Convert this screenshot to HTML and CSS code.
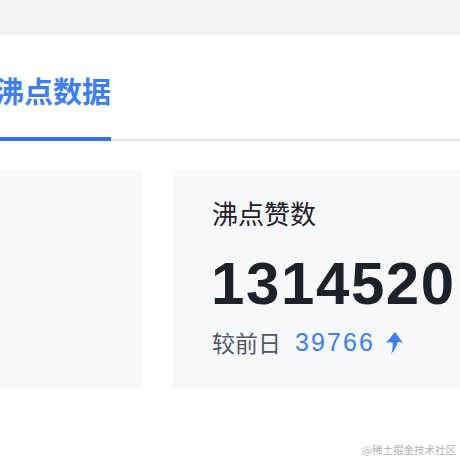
FILE: index.html
```html
<!DOCTYPE html>
<html lang="zh">
<head>
<meta charset="utf-8">
<link rel="stylesheet" href="styles.css">
</head>
<body>
<div class="page">
  <div class="topband"></div>
  <div class="tabs">
    <div class="tab active">沸点数据</div>
  </div>
  <div class="cards">
    <div class="card card-left"></div>
    <div class="card card-right">
      <div class="label">沸点赞数</div>
      <div class="value">1314520</div>
      <div class="compare">
        <span class="compare-label">较前日</span>
        <span class="compare-num">39766</span>
        <svg class="arrow" viewBox="0 0 17 22" width="17" height="22"><path d="M9 0 L17 11 Q14 9.6 11.6 10.2 Q10.4 16.5 5 22 Q7.4 15.5 6.6 10.4 Q3.2 9.8 0 11 Z" fill="#3b7ff2"/></svg>
      </div>
    </div>
  </div>
  <div class="watermark">@稀土掘金技术社区</div>
</div>
</body>
</html>
```
FILE: styles.css
```css
html, body {
  margin: 0;
  padding: 0;
  background: #ffffff;
}
.page {
  position: relative;
  width: 460px;
  height: 460px;
  overflow: hidden;
  font-family: "Noto Sans CJK SC", "Liberation Sans", sans-serif;
}
.topband {
  height: 35px;
  background: #f2f3f5;
}
.tabs {
  display: flex;
  border-bottom: 2px solid #e5e6eb;
}
.tab {
  margin-left: -5px;
  margin-bottom: -2px;
  padding: 35px 0 27px;
  font-size: 29px;
  line-height: 40px;
  font-weight: 700;
  color: #3b7ff2;
  border-bottom: 4px solid #3370f2;
}
.cards {
  display: flex;
  gap: 31px;
  margin-top: 29px;
}
.card {
  height: 218px;
  background: #f7f8fa;
  flex-shrink: 0;
}
.card-left {
  width: 142px;
}
.card-right {
  width: 330px;
  box-sizing: border-box;
  padding: 30px 0 0 39px;
}
.label {
  font-size: 26px;
  line-height: 26px;
  color: #1d2129;
}
.value {
  margin-top: 28px;
  margin-left: -1px;
  font-family: "Liberation Sans", sans-serif;
  font-weight: 700;
  font-size: 60px;
  line-height: 60px;
  letter-spacing: 1.6px;
  color: #1d2129;
}
.compare {
  display: flex;
  align-items: center;
  margin-top: 17px;
  height: 23px;
}
.compare-label {
  font-size: 23px;
  line-height: 23px;
  color: #4e5969;
}
.compare-num {
  margin-left: 14px;
  font-family: "Liberation Sans", sans-serif;
  font-size: 25px;
  line-height: 23px;
  letter-spacing: 2.1px;
  color: #3b7ff2;
}
.arrow {
  margin-left: 11px;
  margin-top: 1px;
}
.watermark {
  position: absolute;
  right: 4px;
  bottom: 3px;
  font-size: 10.5px;
  line-height: 14px;
  color: #b4b4b4;
}
```
